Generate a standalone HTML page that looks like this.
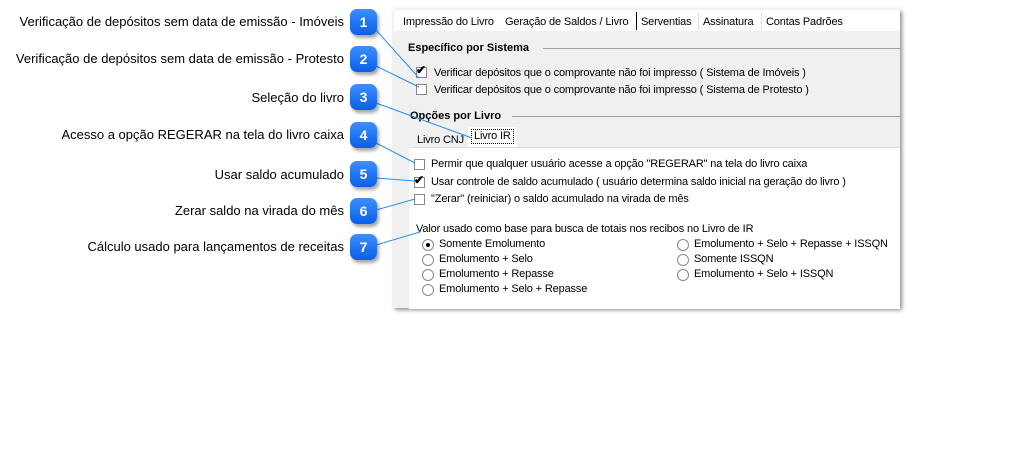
<!DOCTYPE html><html><head><style>
body{margin:0;width:1036px;height:471px;background:#fff;font-family:"Liberation Sans",Arial,sans-serif;font-size:11px;color:#000;position:relative;overflow:hidden}
.a{position:absolute;white-space:nowrap}
.p{letter-spacing:-0.15px}
.lbl{font-size:13px;right:692px;text-align:right}
.b{position:absolute;left:350px;width:27px;height:26px;border-radius:7px;background:linear-gradient(#3d8fff,#0a5fe6);color:#fff;font-weight:bold;font-size:14px;text-align:center;line-height:26px;box-shadow:2px 3px 3px rgba(0,0,0,.35)}
.cb{position:absolute;width:11px;height:11px;border:1px solid #888;background:#fff;box-sizing:border-box}
.rb{position:absolute;width:10px;height:10px;border:1px solid #888;border-radius:50%;background:#fff}
</style></head><body>
<div class="a lbl" style="top:14px">Verificação de depósitos sem data de emissão - Imóveis</div>
<div class="a lbl" style="top:51px">Verificação de depósitos sem data de emissão - Protesto</div>
<div class="a lbl" style="top:90px">Seleção do livro</div>
<div class="a lbl" style="top:127px">Acesso a opção REGERAR na tela do livro caixa</div>
<div class="a lbl" style="top:167px">Usar saldo acumulado</div>
<div class="a lbl" style="top:203px">Zerar saldo na virada do mês</div>
<div class="a lbl" style="top:239px">Cálculo usado para lançamentos de receitas</div>

<div class="a" style="left:393px;top:9px;width:507px;height:299px;background:#f0f0f0;box-shadow:2px 2px 4px rgba(0,0,0,.45)"></div>
<div class="a" style="left:394px;top:10px;width:506px;height:21px;background:#fff"></div>
<div class="a p" style="left:403px;top:16px">Impressão do Livro</div>
<div class="a p" style="left:505px;top:16px">Geração de Saldos / Livro</div>
<div class="a" style="left:636px;top:12px;width:1px;height:18px;background:#000"></div>
<div class="a p" style="left:641px;top:16px">Serventias</div>
<div class="a" style="left:698px;top:12px;width:1px;height:18px;background:#e0e0e0"></div>
<div class="a p" style="left:703px;top:16px">Assinatura</div>
<div class="a" style="left:761px;top:12px;width:1px;height:18px;background:#e0e0e0"></div>
<div class="a p" style="left:766px;top:16px">Contas Padrões</div>

<div class="a" style="left:408px;top:42px;font-weight:bold">Específico por Sistema</div>
<div class="a" style="left:543px;top:48px;width:357px;height:1px;background:#a0a0a0"></div>
<div class="cb" style="left:416px;top:67px"></div><div class="a" style="left:416px;top:63px;font-size:12px;font-weight:bold">✔</div>
<div class="a p" style="left:434px;top:67px">Verificar depósitos que o comprovante não foi impresso ( Sistema de Imóveis )</div>
<div class="cb" style="left:416px;top:84px"></div>
<div class="a p" style="left:434px;top:84px">Verificar depósitos que o comprovante não foi impresso ( Sistema de Protesto )</div>

<div class="a" style="left:410px;top:110px;font-weight:bold">Opções por Livro</div>
<div class="a" style="left:512px;top:116px;width:388px;height:1px;background:#a0a0a0"></div>
<div class="a p" style="left:417px;top:134px">Livro CNJ</div>
<div class="a" style="left:468px;top:127px;width:49px;height:20px;background:#fff"></div>
<div class="a p" style="left:471px;top:129px;border:1px dotted #000;padding:0 2px;line-height:13px">Livro IR</div>
<div class="a" style="left:409px;top:147px;width:491px;height:161px;background:#fff;border-top:1px solid #ddd"></div>

<div class="cb" style="left:414px;top:159px"></div>
<div class="a p" style="left:431px;top:158px">Permir que qualquer usuário acesse a opção "REGERAR" na tela do livro caixa</div>
<div class="cb" style="left:414px;top:177px"></div><div class="a" style="left:414px;top:173px;font-size:12px;font-weight:bold">✔</div>
<div class="a p" style="left:431px;top:176px">Usar controle de saldo acumulado ( usuário determina saldo inicial na geração do livro )</div>
<div class="cb" style="left:414px;top:194px"></div>
<div class="a p" style="left:431px;top:193px">"Zerar" (reiniciar) o saldo acumulado na virada de mês</div>

<div class="a p" style="left:416px;top:223px">Valor usado como base para busca de totais nos recibos no Livro de IR</div>
<div class="rb" style="left:422px;top:239px"></div><div class="a" style="left:426px;top:243px;width:4px;height:4px;border-radius:50%;background:#000"></div>
<div class="a p" style="left:439px;top:238px">Somente Emolumento</div>
<div class="rb" style="left:422px;top:254px"></div><div class="a p" style="left:439px;top:253px">Emolumento + Selo</div>
<div class="rb" style="left:422px;top:269px"></div><div class="a p" style="left:439px;top:268px">Emolumento + Repasse</div>
<div class="rb" style="left:422px;top:284px"></div><div class="a p" style="left:439px;top:283px">Emolumento + Selo + Repasse</div>
<div class="rb" style="left:677px;top:239px"></div><div class="a p" style="left:694px;top:238px">Emolumento + Selo + Repasse + ISSQN</div>
<div class="rb" style="left:677px;top:254px"></div><div class="a p" style="left:694px;top:253px">Somente ISSQN</div>
<div class="rb" style="left:677px;top:269px"></div><div class="a p" style="left:694px;top:268px">Emolumento + Selo + ISSQN</div>

<svg class="a" style="left:0;top:0" width="1036" height="471"><g stroke="#2a8cf0" stroke-width="1" fill="none">
<line x1="376" y1="30" x2="419" y2="78"/><line x1="376" y1="66" x2="419" y2="87"/><line x1="376" y1="103" x2="472" y2="138"/>
<line x1="376" y1="143" x2="415" y2="163"/><line x1="376" y1="178" x2="415" y2="181"/><line x1="376" y1="210" x2="415" y2="199"/><line x1="376" y1="245" x2="420" y2="232"/></g></svg>
<div class="b" style="top:9px">1</div><div class="b" style="top:46px">2</div><div class="b" style="top:84px">3</div>
<div class="b" style="top:122px">4</div><div class="b" style="top:161px">5</div><div class="b" style="top:198px">6</div><div class="b" style="top:234px">7</div>
</body></html>
